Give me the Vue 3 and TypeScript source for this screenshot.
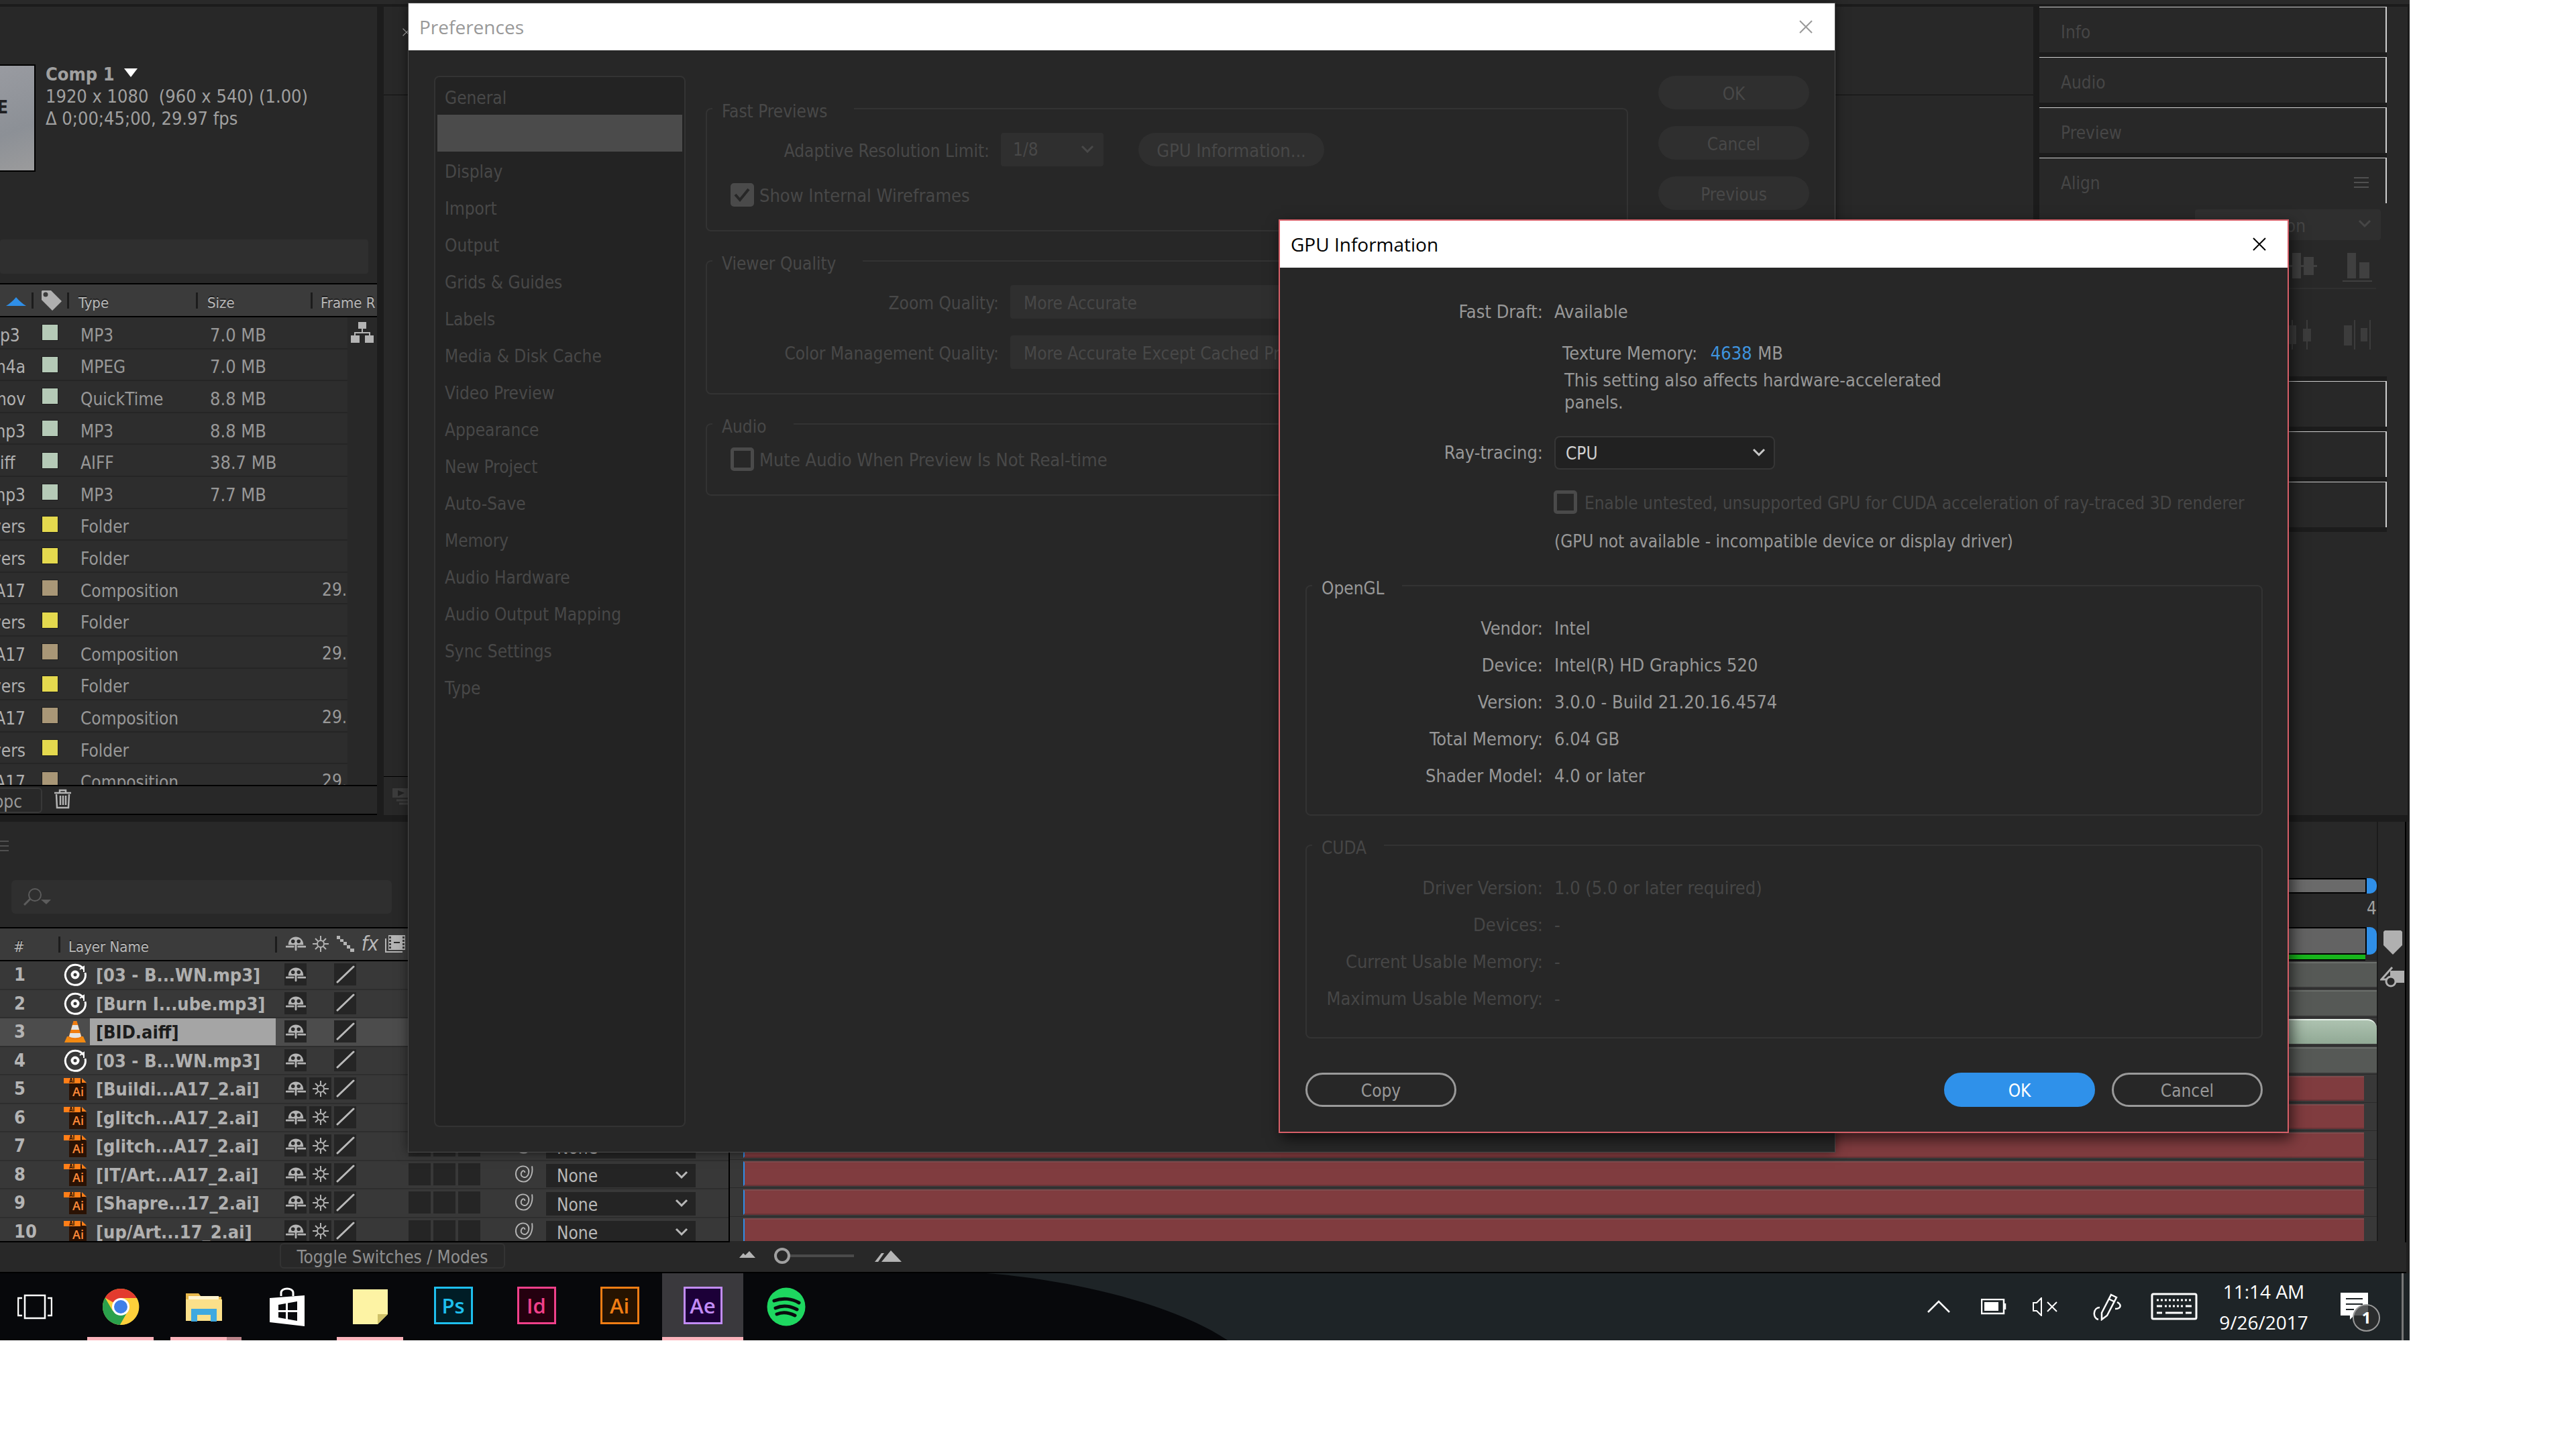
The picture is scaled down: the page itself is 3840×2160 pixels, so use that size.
<script setup lang="ts">
interface Asset { name: string; label: string; type: string; size?: string; rate?: string }
interface Layer { name: string; kind: 'audio' | 'cone' | 'ai' }

const GREEN = 'green'
const assets: Asset[] = [
  { name: 'p3', label: GREEN, type: 'MP3', size: '7.0 MB' },
  { name: 'm4a', label: GREEN, type: 'MPEG', size: '7.0 MB' },
  { name: 'mov', label: GREEN, type: 'QuickTime', size: '8.8 MB' },
  { name: 'mp3', label: GREEN, type: 'MP3', size: '8.8 MB' },
  { name: 'iff', label: GREEN, type: 'AIFF', size: '38.7 MB' },
  { name: 'mp3', label: GREEN, type: 'MP3', size: '7.7 MB' },
  { name: 'yers', label: 'yellow', type: 'Folder' },
  { name: 'yers', label: 'yellow', type: 'Folder' },
  { name: 'A17', label: 'tan', type: 'Composition', rate: '29.' },
  { name: 'yers', label: 'yellow', type: 'Folder' },
  { name: 'A17', label: 'tan', type: 'Composition', rate: '29.' },
  { name: 'yers', label: 'yellow', type: 'Folder' },
  { name: 'A17', label: 'tan', type: 'Composition', rate: '29.' },
  { name: 'yers', label: 'yellow', type: 'Folder' },
  { name: 'A17', label: 'tan', type: 'Composition', rate: '29.' },
]
const narrow = ['p3', 'iff']

const layers: Layer[] = [
  { name: '[03 - B...WN.mp3]', kind: 'audio' },
  { name: '[Burn I...ube.mp3]', kind: 'audio' },
  { name: '[BID.aiff]', kind: 'cone' },
  { name: '[03 - B...WN.mp3]', kind: 'audio' },
  { name: '[Buildi...A17_2.ai]', kind: 'ai' },
  { name: '[glitch...A17_2.ai]', kind: 'ai' },
  { name: '[glitch...A17_2.ai]', kind: 'ai' },
  { name: '[IT/Art...A17_2.ai]', kind: 'ai' },
  { name: '[Shapre...17_2.ai]', kind: 'ai' },
  { name: '[up/Art...17_2.ai]', kind: 'ai' },
]

const categories: string[] = [
  'General', '', 'Display', 'Import', 'Output', 'Grids & Guides', 'Labels',
  'Media & Disk Cache', 'Video Preview', 'Appearance', 'New Project', 'Auto-Save',
  'Memory', 'Audio Hardware', 'Audio Output Mapping', 'Sync Settings', 'Type',
]

const openGl: [string, string][] = [
  ['Vendor:', 'Intel'],
  ['Device:', 'Intel(R) HD Graphics 520'],
  ['Version:', '3.0.0 - Build 21.20.16.4574'],
  ['Total Memory:', '6.04 GB'],
  ['Shader Model:', '4.0 or later'],
]
const cuda: [string, string][] = [
  ['Driver Version:', '1.0 (5.0 or later required)'],
  ['Devices:', '-'],
  ['Current Usable Memory:', '-'],
  ['Maximum Usable Memory:', '-'],
]

const adobe = [
  { id: 'ps', text: 'Ps' },
  { id: 'id', text: 'Id' },
  { id: 'ai', text: 'Ai' },
  { id: 'ae', text: 'Ae' },
]
</script>

<template>
  <div class="screen">
    <svg class="defs" aria-hidden="true">
      <symbol id="shy" viewBox="0 0 32 24">
        <path d="M4 14C4-3 28-3 28 14Z" fill="#b4b4b4" />
        <circle cx="11.500" cy="8.500" r="3" fill="#2b2b2b" /><circle cx="20.500" cy="8.500" r="3" fill="#2b2b2b" />
        <path d="M16 10V22M1 17H12M20 17H31" stroke="#b4b4b4" stroke-width="3" stroke-linecap="round" />
      </symbol>
      <symbol id="sun" viewBox="0 0 24 24">
        <g fill="none" stroke="#b4b4b4" stroke-width="2">
          <circle cx="12" cy="12" r="5" />
          <path d="M12 0V6M12 18V24M0 12H6M18 12H24M4 4L8 8M20 4L16 8M4 20L8 16M20 20L16 16" />
        </g>
      </symbol>
      <symbol id="slash" viewBox="0 0 32 32">
        <path d="M4 27L28 4" stroke="#b9b9b9" stroke-width="3" stroke-linecap="round" />
      </symbol>
      <symbol id="chev" viewBox="0 0 20 12">
        <path d="M2 2L10 10L18 2" fill="none" stroke="currentColor" stroke-width="3" />
      </symbol>
      <symbol id="audio" viewBox="0 0 34 34">
        <path d="M29.500 8.500A15 15 0 1 0 32 14" fill="none" stroke="#fff" stroke-width="3" />
        <path d="M24 9L30 5V13" fill="none" stroke="#fff" stroke-width="2" />
        <circle cx="17" cy="17" r="4.500" fill="none" stroke="#fff" stroke-width="4" />
      </symbol>
      <symbol id="cone" viewBox="0 0 34 34">
        <path d="M5 24H29L33 33H1Z" fill="#f28a12" />
        <path d="M14.500 1H19.500L27 26C22 30 12 30 7 26Z" fill="#f07d10" />
        <path d="M13 7H21L23 14H11ZM9.500 19H24.500L26 24C22 27 12 27 8 24Z" fill="#e4e4e4" />
      </symbol>
      <symbol id="aifile" viewBox="0 0 34 34">
        <path d="M8 3H26L34 10V34H8Z" fill="#2a1204" />
        <path d="M0 1H25V9H0ZM27 1L34 8H27Z" fill="#ff7f18" />
        <text x="8" y="8" font-size="8" font-weight="bold" font-family="DejaVu Sans Condensed, sans-serif" fill="#2a1204">AI</text>
        <text x="13" y="28" font-size="18" font-weight="600" font-family="Open Sans, sans-serif" fill="#ff8a3a">Ai</text>
      </symbol>
      <symbol id="spiral" viewBox="0 0 30 26">
        <path d="M27 1C29 14 23 25 14 25C6 25 2 19 2 13C2 6 7 1 13 1C19 1 23 5 22 11C21 17 17 19 14 18C10 17 9 13 11 10C13 7 16 8 16 11" fill="none" stroke="#b4b4b4" stroke-width="2" />
      </symbol>
      <symbol id="close" viewBox="0 0 20 20">
        <path d="M1 1L19 19M19 1L1 19" stroke="currentColor" stroke-width="2" />
      </symbol>
      <symbol id="menu" viewBox="0 0 22 18">
        <path d="M0 2H22M0 9H22M0 16H22" stroke="#505050" stroke-width="2" />
      </symbol>
    </svg>

    <main class="workspace">
      <section class="project">
        <div class="summary">
          <div class="thumb">IE</div>
          <div class="info">
            <strong>Comp 1<svg class="tri" viewBox="0 0 20 13"><path d="M0 0H20L10 13Z" fill="#fff" /></svg></strong>
            <span>1920 x 1080&nbsp; (960 x 540) (1.00)</span>
            <span>Δ 0;00;45;00, 29.97 fps</span>
          </div>
        </div>
        <input class="find" type="text" aria-label="Search project">
        <div class="assets">
          <table>
            <colgroup><col class="c-name"><col class="c-tag"><col class="c-type"><col class="c-size"><col class="c-rate"><col class="c-flow"></colgroup>
            <thead>
              <tr>
                <th><svg class="sort" viewBox="0 0 30 13"><path d="M0 13C5 10 11 5 15 0C19 5 25 10 30 13Z" fill="#2f8fe8" /></svg></th>
                <th><svg class="tag" viewBox="0 0 30 30"><path fill-rule="evenodd" d="M1 0H14L30 16L16 30L0 14V1ZM6 2.500A3.500 3.500 0 1 0 6 9.500A3.500 3.500 0 1 0 6 2.500Z" fill="#b0b0b0" /></svg></th>
                <th>Type</th><th>Size</th><th colspan="2">Frame R</th>
              </tr>
            </thead>
            <tbody>
              <tr v-for="(a, i) in assets" :key="i">
                <td class="name"><div :class="{ narrow: narrow.includes(a.name) }">{{ a.name }}</div></td>
                <td class="chipcell"><i class="chip" :class="a.label"></i></td>
                <td class="type">{{ a.type }}</td>
                <td class="size">{{ a.size }}</td>
                <td class="rate">{{ a.rate }}</td>
                <td class="flow"><svg v-if="i === 0" viewBox="0 0 34 32"><path d="M11 0H23V10H18V15H29V20H34V31H21V20H27V17H7V20H13V31H0V20H5V15H16V10H11Z" fill="#b4b4b4" /></svg></td>
              </tr>
            </tbody>
          </table>
        </div>
        <footer>
          <button class="bpc">bpc</button>
          <button class="bare" aria-label="Delete"><svg class="trash" viewBox="0 0 27 30"><path d="M1 6H26M9 5V2H18V5M4 8L5 28H22L23 8M10 10V24M14 10V24M18 10V24" fill="none" stroke="#b4b4b4" stroke-width="2.500" /></svg></button>
        </footer>
      </section>

      <section class="comp">
        <div class="tabs"><svg><use href="#close" /></svg></div>
        <div class="view"></div>
        <div class="compfoot"><svg viewBox="0 0 34 26"><path d="M0 0H34V14H0Z" fill="#3c3c3c" /><path d="M8 3L18 7L8 12Z" fill="#222" /><path d="M6 18H34M10 23H34" stroke="#3c3c3c" stroke-width="3" /></svg></div>
      </section>

      <aside class="dock">
        <div class="tab">Info</div>
        <div class="tab">Audio</div>
        <div class="tab">Preview</div>
        <div class="align">
          <div class="tab">Align<svg class="burger"><use href="#menu" /></svg></div>
          <div class="alignsel">on<svg><use href="#chev" /></svg></div>
          <div class="icons">
            <svg viewBox="0 0 44 44"><path d="M5 0H18V38H5ZM22 6H37V33H22ZM0 18H42V21H0Z" fill="#404040" /></svg>
            <svg viewBox="0 0 44 44"><path d="M7 0H20V38H7ZM25 14H40V38H25ZM0 41H44V43H0Z" fill="#404040" /></svg>
          </div>
          <div class="icons dist">
            <svg viewBox="0 0 44 44"><path d="M0 8H11V36H0ZM21 13H33V32H21ZM26 0H28V44H26ZM4 0H6V44H4Z" fill="#3c3c3c" /></svg>
            <svg viewBox="0 0 44 44"><path d="M2 8H14V38H2ZM27 12H37V32H27ZM17 0H19V44H17ZM40 0H42V44H40Z" fill="#3c3c3c" /></svg>
          </div>
        </div>
        <div class="tab"></div>
        <div class="tab"></div>
        <div class="tab"></div>
        <div class="rest"></div>
      </aside>
      <div class="edge"></div>
    </main>

    <section class="timeline">
      <div class="layers">
        <svg class="tlmenu" viewBox="0 0 13 18"><path d="M0 2H13M0 9H13M0 16H13" stroke="#505050" stroke-width="2" /></svg>
        <label class="tlfind">
          <svg viewBox="0 0 42 26"><circle cx="17" cy="10" r="9" fill="none" stroke="#5c5c5c" stroke-width="2" /><path d="M10 16L1 25" stroke="#5c5c5c" stroke-width="3" /><path d="M26 17H41L34 24Z" fill="#5c5c5c" /></svg>
          <input type="text" aria-label="Search timeline">
        </label>
        <div class="rows">
          <table>
            <colgroup><col class="l-num"><col class="l-name"><col class="l-sw"><col class="l-parent"></colgroup>
            <thead>
              <tr>
                <th class="l-hash">#</th>
                <th class="l-title">Layer Name</th>
                <th>
                  <div class="switches head">
                    <i><svg class="shy"><use href="#shy" /></svg></i>
                    <i><svg class="sun"><use href="#sun" /></svg></i>
                    <i><svg class="dots" viewBox="0 0 26 24"><path d="M0 0H5V5H0ZM5 5H10V9H5ZM10 9H15V14H10ZM15 14H20V19H15ZM20 19H26V24H20Z" fill="#b4b4b4" /></svg></i>
                    <i class="fx">fx</i>
                    <i><svg class="film" viewBox="0 0 32 28"><path d="M2 6V26H27" fill="none" stroke="#b4b4b4" stroke-width="2" /><path fill-rule="evenodd" d="M6 1H31V23H6ZM12 4V20H25V4ZM7 3V6H10V3ZM7 8V11H10V8ZM7 13V16H10V13ZM7 18V21H10V18ZM27 3V6H30V3ZM27 8V11H30V8ZM27 13V16H30V13ZM27 18V21H30V18Z" fill="#b4b4b4" /><path d="M12 4H25V20H12Z" fill="#b4b4b4" /><path d="M14 12H23" stroke="#2b2b2b" stroke-width="2" /></svg></i>
                  </div>
                </th>
                <th></th>
              </tr>
            </thead>
            <tbody>
              <tr v-for="(l, i) in layers" :key="i" :class="{ picked: l.kind === 'cone' }">
                <td class="num">{{ i + 1 }}</td>
                <td>
                  <div class="layer">
                    <svg><use :href="l.kind === 'ai' ? '#aifile' : '#' + l.kind" /></svg>
                    <span>{{ l.name }}</span>
                  </div>
                </td>
                <td>
                  <div class="switches">
                    <i class="box"><svg class="shy"><use href="#shy" /></svg></i>
                    <i :class="{ box: l.kind === 'ai' }"><svg v-if="l.kind === 'ai'" class="sun"><use href="#sun" /></svg></i>
                    <i class="box"><svg class="slash"><use href="#slash" /></svg></i>
                    <i></i><i></i><i class="box"></i><i class="box"></i><i class="box"></i>
                  </div>
                </td>
                <td>
                  <div class="parent">
                    <svg class="spiral"><use href="#spiral" /></svg>
                    <span class="pick"><select aria-label="Parent"><option>None</option></select><svg><use href="#chev" /></svg></span>
                  </div>
                </td>
              </tr>
            </tbody>
          </table>
        </div>
      </div>
      <div class="graph">
        <div class="nav"><b></b></div>
        <div class="ticks">4</div>
        <div class="nav area"><b></b></div>
        <div class="cached"></div>
        <div class="tracks">
          <div v-for="(l, i) in layers" :key="i" :class="l.kind"><span></span></div>
        </div>
      </div>
      <div class="tools">
        <svg class="marker" viewBox="0 0 28 36"><path d="M2 0H26L28 2V22L14 36L0 22V2Z" fill="#b0b0b0" /></svg>
        <svg class="graphs" viewBox="0 0 36 32"><path d="M15 7H36V25H15Z" fill="#b0b0b0" /><path d="M18 2L2 20H16" fill="none" stroke="#b0b0b0" stroke-width="3" /><circle cx="16" cy="23" r="7" fill="#282828" stroke="#b0b0b0" stroke-width="3" /></svg>
      </div>
      <div class="tlfoot">
        <button class="toggle">Toggle Switches / Modes</button>
        <svg class="m1" viewBox="0 0 24 10"><path d="M0 10L6 3L9 6L15 0L24 10Z" fill="#b4b4b4" /></svg>
        <input type="range" value="0" aria-label="Timeline zoom">
        <svg class="m2" viewBox="0 0 40 17"><path d="M10 17L24 0L40 17ZM0 17L10 4L14 4L5 17Z" fill="#b4b4b4" /></svg>
      </div>
    </section>

    <nav class="taskbar">
      <svg class="wall" viewBox="0 0 3592 100" preserveAspectRatio="none"><path d="M0 0H1470C1580 8 1740 40 1830 100H0Z" fill="#07080b" /></svg>
      <button class="app first" aria-label="Task view"><svg width="52" height="38" viewBox="0 0 52 38"><path d="M11 2H41V36H11ZM7 6H1V32H7M45 6H51V32H45" fill="none" stroke="#fff" stroke-width="2.500" /></svg></button>
      <button class="app open" aria-label="Chrome"><svg width="56" height="56" viewBox="0 0 56 56"><circle cx="28" cy="28" r="27" fill="#fdd03b" /><path d="M28 28L4.600 14.500A27 27 0 0 1 51.400 14.500L52 15H28Z" fill="#e33b2e" /><path d="M4.600 14.500A27 27 0 0 0 27 55L39 34L16 34Z" fill="#2aa14c" /><path d="M28 15H52A27 27 0 0 1 27 55L39 34Z" fill="#fdd03b" /><circle cx="28" cy="28" r="13" fill="#fff" /><circle cx="28" cy="28" r="10" fill="#3f7fe8" /></svg></button>
      <button class="app open many" aria-label="File Explorer"><svg width="56" height="46" viewBox="0 0 56 46"><path d="M1 3H20L24 8H54V44H1Z" fill="#e8b84c" /><path d="M5 7H50V14H5Z" fill="#fff4cf" /><path d="M1 12H55V44H1Z" fill="#fbe08a" /><path d="M9 26H47V45H38V35H18V45H9Z" fill="#3fa9e0" /></svg></button>
      <button class="app" aria-label="Store"><svg width="54" height="58" viewBox="0 0 54 58"><path d="M18 13V8C18 0 36 0 36 8V13" fill="none" stroke="#fff" stroke-width="3" /><path d="M1 16L53 12V58L1 52Z" fill="#fff" /><path d="M14 26L25 24V34H14ZM28 23.500L42 21V34H28ZM14 37H25V47L14 45ZM28 37H42V50L28 47.500Z" fill="#0a0b0e" /></svg></button>
      <button class="app open" aria-label="Sticky Notes"><svg width="54" height="54" viewBox="0 0 54 54"><path d="M1 1H53V38L38 53H1Z" fill="#fdf3a4" /><path d="M53 38L38 53V38Z" fill="#cfc169" /></svg></button>
      <button v-for="a in adobe" :key="a.id" class="app" :class="{ active: a.id === 'ae' }"><span class="cc" :class="a.id">{{ a.text }}</span></button>
      <button class="app" aria-label="Spotify"><svg width="58" height="58" viewBox="0 0 58 58"><circle cx="29" cy="29" r="28.500" fill="#1ed760" /><path d="M11 20C24 15 38 17 48 23M13 31C24 26 36 28 45 33M15 40C24 36 34 38 42 42" fill="none" stroke="#0a0b0e" stroke-width="5" stroke-linecap="round" /></svg></button>
      <div class="tray">
        <svg class="t-up" width="34" height="20" viewBox="0 0 34 20"><path d="M1 18L17 2L33 18" fill="none" stroke="#fff" stroke-width="2.500" /></svg>
        <svg class="t-bat" width="38" height="24" viewBox="0 0 38 24"><path d="M1 1H34V22H1ZM36 7V16" fill="none" stroke="#fff" stroke-width="2.500" /><path d="M5 5H26V18H5Z" fill="#fff" /></svg>
        <svg class="t-vol" width="38" height="28" viewBox="0 0 38 28"><path d="M1 8H6L13 1V27L6 20H1ZM22 7L36 21M36 7L22 21" fill="none" stroke="#fff" stroke-width="2" /></svg>
        <svg class="t-pen" width="42" height="42" viewBox="0 0 42 42"><path d="M27 3L35 7L21 34L13 40L13 30ZM23 9L31 13M10 22C0 22 -1 38 8 40M36 14C43 18 42 24 33 24" fill="none" stroke="#fff" stroke-width="2.500" /></svg>
        <svg class="t-key" width="70" height="42" viewBox="0 0 70 42"><rect x="2" y="2" width="66" height="37" rx="2" fill="none" stroke="#fff" stroke-width="3" /><path d="M9 11H61" stroke="#fff" stroke-width="3" stroke-dasharray="3 3" /><path d="M9 20H61" stroke="#fff" stroke-width="3" stroke-dasharray="8 4 3 3 3 3 3 3 3 3 3 4 9" /><path d="M9 30H17M22 30H48M52 30H61" stroke="#fff" stroke-width="3" /></svg>
        <div class="clock"><span>11:14 AM</span><span>9/26/2017</span></div>
        <div class="note"><svg width="58" height="62" viewBox="0 0 58 62"><path d="M0 2H41V36H20L14 42V36H0Z" fill="#fff" /><path d="M8 11H33M8 19H33M8 27H20" stroke="#1d2326" stroke-width="2" /></svg><span>1</span></div>
      </div>
    </nav>

    <div class="window prefs" role="dialog" aria-label="Preferences">
      <header>Preferences<button class="bare" aria-label="Close"><svg class="x"><use href="#close" /></svg></button></header>
      <div class="prefbody">
        <ul>
          <li v-for="(c, i) in categories" :key="i" :class="{ on: !c }">{{ c }}</li>
        </ul>
        <div class="groups">
          <fieldset>
            <legend>Fast Previews</legend>
            <div class="row first-row">
              <label for="res">Adaptive Resolution Limit:</label>
              <span class="sel short"><select id="res"><option>1/8</option></select><svg><use href="#chev" /></svg></span>
              <button class="pill gpu">GPU Information...</button>
            </div>
            <label class="check"><input type="checkbox" checked><span>Show Internal Wireframes</span></label>
          </fieldset>
          <fieldset>
            <legend>Viewer Quality</legend>
            <div class="row">
              <label for="zq">Zoom Quality:</label>
              <span class="sel"><select id="zq"><option>More Accurate</option></select></span>
            </div>
            <div class="row">
              <label for="cq">Color Management Quality:</label>
              <span class="sel"><select id="cq"><option>More Accurate Except Cached Preview</option></select></span>
            </div>
          </fieldset>
          <fieldset>
            <legend>Audio</legend>
            <label class="check"><input type="checkbox"><span>Mute Audio When Preview Is Not Real-time</span></label>
          </fieldset>
        </div>
        <div class="side">
          <button class="pill">OK</button>
          <button class="pill">Cancel</button>
          <button class="pill">Previous</button>
        </div>
      </div>
    </div>

    <div class="window gpuinfo" role="dialog" aria-label="GPU Information">
      <header>GPU Information<button class="bare" aria-label="Close"><svg class="x"><use href="#close" /></svg></button></header>
      <div class="gpubody">
        <div class="pair"><span>Fast Draft:</span><span>Available</span></div>
        <div class="texture">
          <p>Texture Memory: <a href="#">4638</a> MB</p>
          <p class="hint">This setting also affects hardware-accelerated panels.</p>
        </div>
        <div class="pair ray">
          <label for="ray">Ray-tracing:</label>
          <span class="sel"><select id="ray"><option>CPU</option></select><svg><use href="#chev" /></svg></span>
        </div>
        <label class="check off"><input type="checkbox" disabled><span>Enable untested, unsupported GPU for CUDA acceleration of ray-traced 3D renderer</span></label>
        <p class="na">(GPU not available - incompatible device or display driver)</p>
        <fieldset>
          <legend>OpenGL</legend>
          <div v-for="r in openGl" :key="r[0]" class="pair tall"><span>{{ r[0] }}</span><span>{{ r[1] }}</span></div>
        </fieldset>
        <fieldset class="off">
          <legend>CUDA</legend>
          <div v-for="r in cuda" :key="r[0]" class="pair tall"><span>{{ r[0] }}</span><span>{{ r[1] }}</span></div>
        </fieldset>
        <div class="actions">
          <button class="btn">Copy</button>
          <button class="btn primary">OK</button>
          <button class="btn">Cancel</button>
        </div>
      </div>
    </div>
  </div>
</template>

<style>
body { background: #fff; }
</style>

<style scoped>
* { box-sizing: border-box; }
svg { display: block; flex: none; }
button, input, select { font: inherit; color: inherit; margin: 0; padding: 0; border: 0; background: none; }
select { appearance: none; outline: 0; }
p, ul { margin: 0; padding: 0; list-style: none; }
i { font-style: normal; }
.defs { position: absolute; width: 0; height: 0; }

.screen {
  position: relative;
  overflow: hidden;
  margin-right: 248px;
  background: #1c1c1c;
  color: #a0a0a0;
  font: 26px/32px "DejaVu Sans Condensed", "DejaVu Sans", sans-serif;
}

/* upper panels */
.workspace { display: flex; height: 1225px; padding: 4px 3px 10px 0; border-top: 6px solid #292929; }
.project { display: flex; flex-direction: column; flex: none; width: 562px; background: #282828; overflow: hidden; }
.summary { display: flex; gap: 15px; height: 261px; margin-top: 86px; }
.thumb { display: flex; justify-content: flex-end; width: 53px; height: 160px; padding: 46px 39px 0 0; border: 2px solid #000; border-left: 0; background: linear-gradient(160deg, #999ba1, #8c9096 60%, #9b9b9c); color: #1f1f22; font-size: 27px; font-weight: bold; overflow: hidden; }
.info { display: flex; flex-direction: column; margin-top: -2px; font-size: 27px; line-height: 33px; }
.info strong { display: flex; align-items: center; gap: 14px; }
.tri { width: 20px; height: 13px; margin-bottom: 4px; }
.find { width: 549px; height: 51px; margin-bottom: 14px; border-radius: 4px; background: #2f2f2f; }
.assets { height: 750px; overflow: hidden; border-top: 2px solid #000; border-bottom: 2px solid #000; }
table { border-collapse: collapse; table-layout: fixed; }
.assets table { width: 562px; height: 763px; }
.c-name { width: 50px; } .c-tag { width: 53px; } .c-type { width: 192px; } .c-size { width: 171px; } .c-rate { width: 52px; } .c-flow { width: 44px; }
th { height: 48px; padding: 12px 0 0 12px; text-align: left; vertical-align: top; font-size: 22px; font-weight: normal; color: #b8b8b8; background: linear-gradient(#1c1c1c, #1c1c1c) right 0 top 12px / 3px 24px no-repeat #3b3b3b; border-bottom: 2px solid #000; overflow: hidden; white-space: nowrap; text-shadow: 0 -2px 0 #1f1f1f; }
th:last-child { background: #3b3b3b; }
.assets th { padding-left: 14px; }
.assets th:first-child { padding-left: 9px; }
.assets th:last-child { padding-left: 12px; }
.assets th:nth-child(2) { padding: 9px 0 0 12px; }
.sort { width: 30px; height: 13px; margin-top: 7px; }
.tag { width: 30px; height: 30px; }
.assets td { height: 47px; padding: 0; background: #2d2d2d; border-bottom: 2px solid #252525; overflow: hidden; white-space: nowrap; vertical-align: middle; color: #989898; }
.name div { display: flex; justify-content: flex-end; padding: 8px 12px 0 0; overflow: hidden; color: #b0b0b0; }
.name .narrow { justify-content: flex-start; }
.chip { display: block; width: 25px; height: 25px; margin-left: 12px; border: 1px solid #1e1e1e; }
.green { background: #b5cab7; } .yellow { background: #e4d94e; } .tan { background: #a99777; }
.assets td.type { padding: 8px 0 0 17px; }
.assets td.size { padding: 8px 0 0 18px; font-size: 27px; }
.assets td.rate { padding: 4px 0 0 14px; }
.assets td.flow { background: #282828; border-bottom-color: #282828; padding-left: 5px; }
.flow svg { width: 34px; height: 32px; }
.project footer { display: flex; gap: 17px; height: 43px; padding-top: 2px; border-bottom: 2px solid #000; }
.bpc { display: flex; justify-content: flex-end; width: 63px; height: 38px; padding: 3px 28px 0 0; border: 2px solid #383838; border-left: 0; border-radius: 0 6px 6px 0; color: #989898; overflow: hidden; }
.trash { width: 27px; height: 30px; margin-bottom: 6px; }

.comp { display: flex; flex-direction: column; flex: 1; margin: 0 9px 0 10px; background: #282828; }
.tabs { height: 132px; padding: 32px 28px; border-bottom: 1px solid #111; color: #b0b0b0; }
.tabs svg { width: 12px; height: 12px; }
.view { flex: 1; border-bottom: 1px solid #000; }
.compfoot { height: 57px; padding: 17px 13px; }
.compfoot svg { width: 34px; height: 26px; }

.dock { display: flex; flex-direction: column; flex: none; width: 518px; gap: 7px; color: #464646; background: #1c1c1c; }
.tab { position: relative; height: 68px; padding: 21px 32px 0; background: #282828; border: 1px solid #cfcfcf; border-width: 1px 2px 0 0; }
.rest { flex: 1; background: #282828; }
.align { height: 326px; background: #282828; }
.burger { position: absolute; right: 25px; top: 27px; width: 22px; height: 18px; }
.alignsel { display: flex; align-items: center; justify-content: flex-end; gap: 78px; width: 277px; height: 46px; margin: 9px 9px 0 auto; padding: 4px 14px 0 0; border-radius: 4px; background: #2f2f2f; }
.alignsel svg { width: 20px; height: 12px; margin-bottom: 8px; }
.icons { display: flex; justify-content: flex-end; gap: 36px; width: 400px; height: 54px; margin: 19px 16px 0 auto; padding-right: 6px; border-bottom: 2px solid #303030; }
.icons svg { width: 44px; height: 44px; }
.dist { margin-top: 46px; border: 0; }
.edge { flex: none; width: 31px; background: #282828; }

/* timeline */
.timeline { display: flex; flex-wrap: wrap; background: #282828; border-right: 5px solid #202020; }
.layers { flex: none; width: 1088px; height: 627px; border-right: 2px solid #000; }
.tlmenu { width: 13px; height: 18px; margin: 27px 0 42px; }
.tlfind { display: flex; align-items: center; width: 567px; height: 50px; margin: 0 0 20px 17px; padding-left: 18px; border-radius: 6px; background: #2f2f2f; }
.tlfind svg { width: 42px; height: 26px; }
.tlfind input { flex: 1; min-width: 0; }
.rows { height: 470px; overflow: hidden; border-top: 2px solid #000; border-bottom: 2px solid #000; }
.rows table { width: 1086px; height: 474px; }
.l-num { width: 90px; } .l-name { width: 323px; } .l-sw { width: 325px; }
.l-hash { padding-left: 20px; } .l-title { padding-left: 12px; }
.rows th:nth-child(3) { padding: 6px 0 0 11px; background: #3b3b3b; }
.rows td { height: 42px; padding: 0; vertical-align: top; background: #383838; border-bottom: 2px solid #2e2e2e; overflow: hidden; white-space: nowrap; }
.rows .picked td { background: #4c4c4c; }
.rows td.num { padding: 4px 0 0 21px; font-size: 27px; font-weight: bold; color: #b4b4b4; }
.layer { display: flex; align-items: center; height: 40px; padding-left: 5px; }
.layer svg { width: 34px; height: 34px; margin-right: 5px; }
.layer span { flex: 1; height: 40px; margin-right: 2px; padding: 5px 0 0 9px; font-size: 27px; font-weight: bold; color: #b0b0b0; }
.picked .layer span { background: #a5a5a5; color: #1c1c1c; }
.switches { display: flex; gap: 4px; padding: 3px 0 0 11px; }
.switches.head { padding-left: 0; padding-top: 0; }
.switches i { display: flex; align-items: center; justify-content: center; flex: none; width: 33px; height: 33px; }
.switches .box { background: #252525; }
.shy { width: 30px; height: 23px; } .sun { width: 24px; height: 24px; } .slash { width: 32px; height: 32px; }
.dots { width: 26px; height: 24px; } .film { width: 32px; height: 28px; }
.switches .fx { font: italic 30px/30px "DejaVu Sans Condensed", sans-serif; text-shadow: none; }
.parent { display: flex; align-items: flex-start; padding: 4px 0 0 29px; }
.spiral { width: 29px; height: 26px; margin: 2px 18px 0 0; }
.pick { position: relative; display: flex; width: 223px; height: 35px; background: #242424; color: #b8b8b8; }
.pick select { flex: 1; padding: 2px 0 0 16px; text-align: left; }
.pick svg { position: absolute; right: 11px; top: 10px; width: 20px; height: 12px; pointer-events: none; }

.graph { flex: 1; height: 625px; padding-top: 84px; border-right: 2px solid #1c1c1c; overflow: hidden; }
.nav { display: flex; height: 23px; }
.nav::before { content: ""; flex: 1; background: #6a6a6a; border: 2px solid #000; }
.nav b { width: 15px; border-radius: 0 10px 10px 0; background: #2f8fe8; }
.area { height: 41px; }
.area::before { background: #636363; }
.ticks { display: flex; justify-content: flex-end; height: 50px; padding-top: 6px; overflow: hidden; }
.cached { height: 9px; margin-right: 17px; background: #17b51c; border-bottom: 2px solid #000; }
.tracks { display: grid; grid-template-rows: repeat(10, 1fr); height: 424px; }
.tracks div { display: flex; padding: 2px 0; background: #383838; border-bottom: 1px solid #2a2a2a; }
.tracks span { flex: 1; margin-left: 20px; background: #565956; border-top: 2px solid #6c706c; border-left: 2px solid #2f8fe8; }
.tracks .cone span { background: linear-gradient(#adc2b0, #91a995); border-top: 2px solid #e8f2ea; border-radius: 0 14px 0 0; }
.tracks .ai span { margin-right: 19px; background: #803c3f; border-top-color: #804b4d; border-bottom: 2px solid #6b3437; }
.tools { display: flex; flex-direction: column; gap: 17px; flex: none; width: 42px; height: 627px; padding: 162px 0 0 3px; border-right: 2px solid #000; }
.marker { width: 28px; height: 36px; margin-left: 5px; } .graphs { width: 36px; height: 32px; }
.tlfoot { display: flex; align-items: center; width: 100%; height: 46px; padding: 0 0 4px 417px; background: #282828; border-bottom: 2px solid #000; }
.toggle { width: 336px; height: 38px; margin-right: 349px; padding-top: 3px; border: 2px solid #333; border-radius: 6px; color: #909090; }
.m1 { width: 24px; height: 10px; margin: 0 28px 4px 0; } .m2 { width: 40px; height: 17px; margin-left: 31px; }
.tlfoot input { appearance: none; width: 119px; height: 4px; background: #4a4a4a; }
.tlfoot input::-webkit-slider-thumb { appearance: none; width: 24px; height: 24px; border: 4px solid #a0a0a0; border-radius: 50%; background: #282828; }

/* taskbar */
.taskbar { position: relative; display: flex; height: 100px; background: #1e2427; color: #fff; }
.wall { position: absolute; inset: 0; width: 100%; height: 100%; }
.app { position: relative; display: flex; align-items: center; justify-content: center; flex: none; width: 121px; margin-right: 3px; }
.app.first { width: 116px; padding-right: 12px; }
.open::after, .active::after { content: ""; position: absolute; left: 11px; right: 11px; bottom: 0; height: 5px; background: #fbb3bb; }
.many::after { right: 4px; background: linear-gradient(90deg, #fbb3bb 84px, #b98288 84px); }
.active { background: #3a393d; }
.active::after { left: 0; right: 0; }
.cc { width: 58px; height: 56px; margin-bottom: 4px; border: 3px solid; font: 600 31px/50px "Open Sans", sans-serif; }
.ps { background: #001d26; color: #1ebfee; } .id { background: #25000f; color: #f0408a; }
.ai.cc { background: #261300; color: #f07d14; } .ae { background: #1c0038; color: #c28cf5; }
.tray { position: relative; display: flex; align-items: center; margin-left: auto; padding-right: 8px; border-right: 3px solid #777; margin-right: 9px; }
.t-up { margin-right: 46px; } .t-bat { margin-right: 39px; } .t-vol { margin-right: 52px; } .t-pen { margin-right: 44px; } .t-key { margin-right: 31px; }
.clock { display: flex; flex-direction: column; gap: 8px; width: 135px; margin-right: 47px; align-items: center; font: 28px/38px "Open Sans", sans-serif; white-space: nowrap; }
.note { position: relative; width: 83px; height: 62px; margin-top: 16px; }
.note span { position: absolute; left: 18px; top: 19px; width: 41px; height: 41px; border: 2px solid #999; border-radius: 50%; background: #2d2e30cc; font: bold 24px/36px "Open Sans", sans-serif; text-align: center; }

/* dialogs */
.window { position: absolute; background: #272727; }
.window header { display: flex; align-items: center; justify-content: space-between; height: 70px; padding: 0 33px 0 16px; background: #fff; font: 28px/40px "Open Sans", sans-serif; }
.bare { display: flex; align-items: center; }
.x { width: 20px; height: 20px; }
.prefs { left: 608px; top: 4px; width: 2128px; height: 1714px; border: 1px solid #4a4a4a; box-shadow: 0 0 16px #0008; color: #484848; }
.prefs header { color: #999; }
.prefbody { display: flex; padding-left: 38px; }
.prefbody ul { flex: none; width: 375px; height: 1567px; margin-top: 38px; padding: 1px 3px; border: 2px solid #333; border-radius: 8px; background: #232323; }
.prefbody li { height: 55px; padding: 14px 0 0 11px; }
.prefbody li.on { background: #4b4b4b; }
.groups { display: flex; flex-direction: column; gap: 24px; width: 1375px; margin: 67px 45px 0 30px; }
fieldset { min-width: 0; margin: 0; padding: 15px 0 36px; border: 2px solid #333; border-radius: 8px; }
legend { margin-left: 8px; padding: 8px 40px 0 14px; }
.row { display: flex; align-items: center; gap: 17px; height: 51px; padding-left: 113px; }
.row + .row { margin-top: 24px; }
.row label { width: 322px; text-align: right; white-space: nowrap; padding-top: 4px; }
.first-row label { width: 308px; }
.sel { position: relative; display: flex; width: 500px; height: 50px; }
.sel select { flex: 1; min-width: 0; padding: 4px 20px 0; border-radius: 4px; background: #2f2f2f; opacity: 1; }
.sel.short select { padding: 0 18px; }
.sel svg { position: absolute; right: 14px; top: 18px; width: 20px; height: 12px; pointer-events: none; }
.sel.short { width: 153px; }
.pill { display: flex; align-items: center; justify-content: center; width: 225px; height: 50px; padding-top: 4px; border-radius: 25px; background: #2f2f2f; }
.pill.gpu { width: 277px; margin-left: 35px; font-size: 27px; }
.check { display: flex; align-items: center; gap: 8px; height: 34px; margin-left: 35px; font-size: 27px; white-space: nowrap; }
.check span { padding-top: 4px; }
.row + .check { margin-top: 25px; }
.check input { appearance: none; flex: none; width: 35px; height: 35px; border: 5px solid #4a4a4a; border-radius: 5px; }
.check input:checked { background: #4a4a4a url("data:image/svg+xml,%3Csvg xmlns='http://www.w3.org/2000/svg' viewBox='0 0 25 25'%3E%3Cpath d='M2 12L9 20L22 4' fill='none' stroke='%23272727' stroke-width='4'/%3E%3C/svg%3E") center / 25px 25px no-repeat; }
.side { display: flex; flex-direction: column; gap: 25px; margin-top: 38px; }

.gpuinfo { left: 1906px; top: 327px; width: 1506px; height: 1362px; border: 2px solid #d65f68; box-shadow: 4px 8px 20px #000a; color: #989898; }
.gpuinfo header { padding-right: 32px; color: #000; }
.gpubody { display: flex; flex-direction: column; padding: 50px 37px 0 38px; font-size: 27px; }
.pair { display: flex; align-items: center; gap: 17px; min-height: 32px; }
.pair > :first-child { flex: none; width: 354px; text-align: right; }
.texture { margin: 30px 0 0 383px; }
.texture p { white-space: pre-wrap; }
.texture a { margin: 0 1px 0 12px; color: #3f93dd; text-decoration: none; }
.texture .hint { width: 620px; margin: 7px 0 0 3px; line-height: 33px; }
.ray { margin-top: 34px; }
.ray .sel { width: 329px; }
.ray select { padding: 2px 15px 0; border: 2px solid #363636; border-radius: 8px; background: #212121; color: #d0d0d0; font-size: 26px; }
.ray svg { color: #c8c8c8; }
.gpubody .check { margin: 31px 0 26px 370px; gap: 11px; font-size: 26px; }
.off { color: #464646; }
.na { margin-left: 371px; font-size: 26px; }
.gpubody fieldset { margin-top: 30px; padding: 16px 0 30px; }
.gpubody fieldset + fieldset { margin-top: 24px; }
.tall { height: 55px; }
.tall > :first-child { width: 352px; }
.gpubody legend { padding-right: 26px; font-size: 26px; }
.actions { display: flex; gap: 25px; margin-top: 51px; font-size: 26px; }
.btn { width: 225px; height: 51px; padding-top: 3px; border: 3px solid #9a9a9a; border-radius: 26px; }
.btn:first-child { margin-right: auto; }
.btn.primary { border-color: #2f91ea; background: #2f91ea; color: #fff; }
</style>
